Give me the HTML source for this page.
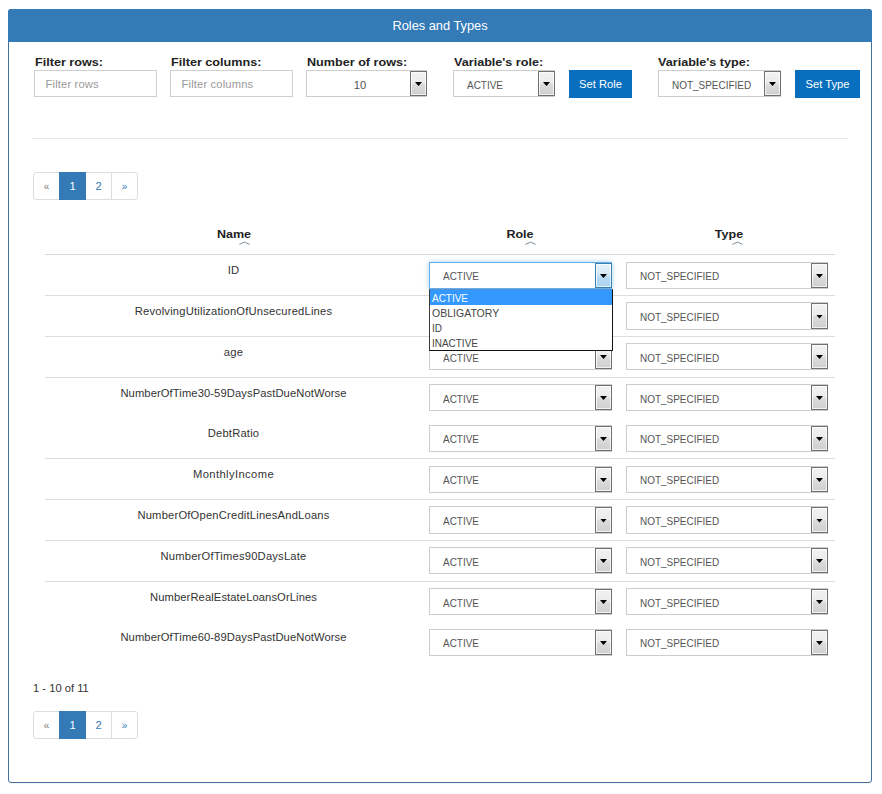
<!DOCTYPE html>
<html lang="en">
<head>
<meta charset="utf-8">
<title>Roles and Types</title>
<style>
*{box-sizing:border-box;}
html,body{margin:0;padding:0;}
body{width:882px;height:794px;background:#fff;position:relative;overflow:hidden;
  font-family:"Liberation Sans",Arial,sans-serif;font-size:11.2px;color:#333;}
.abs{position:absolute;}
.panel{position:absolute;left:8px;top:9px;width:864px;height:774px;border:1px solid #44709c;box-shadow:0 1px 1px rgba(0,0,0,.05);border-radius:3px;background:#fff;}
.panel-heading{position:absolute;left:-1px;top:-1px;width:864px;height:33px;background:#337ab7;border-radius:3px 3px 0 0;
  color:#fff;text-align:center;font-size:12.8px;line-height:33px;}
.lbl{position:absolute;top:55px;height:14px;line-height:14px;font-weight:bold;font-size:10.6px;color:#222;white-space:nowrap;
  transform-origin:0 50%;transform:scaleX(1.19);}
.inp{position:absolute;top:70px;height:27px;width:123px;border:1px solid #cfcfcf;background:#fff;color:#999;
  line-height:27px;padding-left:10.6px;font-size:11.2px;letter-spacing:0.15px;white-space:nowrap;}
.sel{position:absolute;height:27px;border:1px solid #cdcdcd;background:#fff;color:#555;line-height:26px;font-size:11.2px;white-space:nowrap;}
.sel .t{position:absolute;left:13px;top:0;transform-origin:0 50%;transform:scaleX(0.89);}
.sel .tc{position:absolute;left:3px;right:16px;top:0;text-align:center;}
.sel.tp .t,.sel.tp .tc{top:1px;}
.sel .btn{position:absolute;right:-1px;top:0;bottom:0;width:17px;border:1px solid #707070;border-radius:0;
  background:linear-gradient(#f2f2f2 0%,#ebebeb 48%,#dcdcdc 52%,#cfcfcf 100%);box-shadow:inset 0 0 0 1px rgba(255,255,255,.7);}
.sel .btn:after{content:"";position:absolute;left:4px;top:50%;margin-top:-1.5px;width:7px;height:4px;background:#000;clip-path:polygon(0 0,100% 0,50% 100%);}
.sel.focus{border-color:#66afe9;box-shadow:0 0 5px rgba(102,175,233,.6);}
.sel.focus .btn{border-color:#3c7fb1;background:linear-gradient(#e6f2fb 0%,#d2e8f8 48%,#bbdcf5 52%,#a9d3f2 100%);}
.bbtn{position:absolute;top:70px;height:28px;background:#086fbe;color:#fff;text-align:center;line-height:29px;font-size:11.2px;white-space:nowrap;}
.hr{position:absolute;left:32px;top:138px;width:816px;height:1px;background:#e8e8e8;}
.pg{position:absolute;left:33px;height:28px;display:flex;}
.pg span{display:block;height:28px;border:1px solid #ddd;margin-left:-1px;line-height:26px;text-align:center;color:#337ab7;font-size:11.2px;background:#fff;}
.pg span:first-child{margin-left:0;border-radius:3px 0 0 3px;}
.pg span:last-child{border-radius:0 3px 3px 0;}
.pg span.dis{color:#777;font-size:10px;line-height:28px;}
.pg span.nx{font-size:10px;line-height:28px;}
.pg span.on{background:#337ab7;border-color:#337ab7;color:#fff;position:relative;}
.th{position:absolute;top:227px;height:14px;line-height:14px;font-weight:bold;font-size:10.8px;color:#222;text-align:center;white-space:nowrap;transform:scaleX(1.16);}
.sort{position:absolute;top:241.4px;width:11px;height:4px;}
.line{position:absolute;left:45px;width:790px;height:1px;background:#ddd;}
.nm{position:absolute;left:45px;width:377px;text-align:center;height:14px;line-height:14px;font-size:11.2px;color:#333;white-space:nowrap;letter-spacing:0.2px;}
.dd{position:absolute;left:429px;top:289px;width:184px;height:62px;border:1px solid #111;border-top-color:#5a8ed0;border-left-color:#3a3a3a;background:#fff;color:#444;font-size:11.2px;}
.dd div{height:15px;line-height:17px;padding-left:2px;overflow:hidden;}
.dd div span{display:inline-block;transform-origin:0 50%;transform:scaleX(0.89);}
.dd div.on{background:#3399ff;color:#fff;}
</style>
</head>
<body>
<div class="panel">
  <div class="panel-heading">Roles and Types</div>
</div>

<div class="lbl" style="left:35px;">Filter rows:</div>
<div class="lbl" style="left:171px;">Filter columns:</div>
<div class="lbl" style="left:307px;">Number of rows:</div>
<div class="lbl" style="left:454px;">Variable's role:</div>
<div class="lbl" style="left:658px;">Variable's type:</div>

<div class="inp" style="left:34px;">Filter rows</div>
<div class="inp" style="left:170px;">Filter columns</div>
<div class="sel tp" style="left:306px;top:70px;width:121px;"><span class="tc">10</span><span class="btn"></span></div>
<div class="sel tp" style="left:453px;top:70px;width:102px;"><span class="t">ACTIVE</span><span class="btn"></span></div>
<div class="bbtn" style="left:569px;width:63px;">Set Role</div>
<div class="sel tp" style="left:658px;top:70px;width:123px;"><span class="t">NOT_SPECIFIED</span><span class="btn"></span></div>
<div class="bbtn" style="left:795px;width:65px;">Set Type</div>

<div class="hr"></div>

<div class="pg" style="top:172px;"><span class="dis" style="width:27px">«</span><span class="on" style="width:27px">1</span><span style="width:27px">2</span><span class="nx" style="width:27px">»</span></div>

<div class="th" style="left:204px;width:60px;">Name</div>
<div class="th" style="left:490px;width:60px;">Role</div>
<div class="th" style="left:698.5px;width:60px;">Type</div>
<svg class="sort" style="left:239.2px;" viewBox="0 0 11 4"><path d="M0.3 3.4 L5.5 1.1 L10.7 3.4" fill="none" stroke="#6f7f8f" stroke-width="0.9"/></svg>
<svg class="sort" style="left:525.1px;" viewBox="0 0 11 4"><path d="M0.3 3.4 L5.5 1.1 L10.7 3.4" fill="none" stroke="#6f7f8f" stroke-width="0.9"/></svg>
<svg class="sort" style="left:732.2px;" viewBox="0 0 11 4"><path d="M0.3 3.4 L5.5 1.1 L10.7 3.4" fill="none" stroke="#6f7f8f" stroke-width="0.9"/></svg>

<div class="line" style="top:254px;background:#d6d6d6;"></div>
<div class="line" style="top:295px;"></div>
<div class="line" style="top:336px;"></div>
<div class="line" style="top:377px;"></div>
<div class="line" style="top:458px;"></div>
<div class="line" style="top:499px;"></div>
<div class="line" style="top:540px;"></div>
<div class="line" style="top:581px;"></div>

<div class="nm" style="top:263px;">ID</div>
<div class="nm" style="top:304px;">RevolvingUtilizationOfUnsecuredLines</div>
<div class="nm" style="top:345px;">age</div>
<div class="nm" style="top:386px;letter-spacing:0.1px;">NumberOfTime30-59DaysPastDueNotWorse</div>
<div class="nm" style="top:426px;">DebtRatio</div>
<div class="nm" style="top:467px;letter-spacing:0.4px;">MonthlyIncome</div>
<div class="nm" style="top:508px;">NumberOfOpenCreditLinesAndLoans</div>
<div class="nm" style="top:549px;">NumberOfTimes90DaysLate</div>
<div class="nm" style="top:590px;letter-spacing:0.1px;">NumberRealEstateLoansOrLines</div>
<div class="nm" style="top:630px;letter-spacing:0.1px;">NumberOfTime60-89DaysPastDueNotWorse</div>



<div class="sel focus" style="left:429px;top:262px;width:183px;height:27px;"><span class="t" style="top:0px">ACTIVE</span><span class="btn"></span></div>
<div class="sel" style="left:429px;top:302px;width:183px;height:28px;"><span class="t" style="top:1px">ACTIVE</span><span class="btn"></span></div>
<div class="sel" style="left:429px;top:343px;width:183px;height:27px;"><span class="t" style="top:1px">ACTIVE</span><span class="btn"></span></div>
<div class="sel" style="left:429px;top:384px;width:183px;height:27px;"><span class="t" style="top:1px">ACTIVE</span><span class="btn"></span></div>
<div class="sel" style="left:429px;top:425px;width:183px;height:27px;"><span class="t" style="top:0px">ACTIVE</span><span class="btn"></span></div>
<div class="sel" style="left:429px;top:466px;width:183px;height:27px;"><span class="t" style="top:0px">ACTIVE</span><span class="btn"></span></div>
<div class="sel" style="left:429px;top:506px;width:183px;height:28px;"><span class="t" style="top:1px">ACTIVE</span><span class="btn"></span></div>
<div class="sel" style="left:429px;top:547px;width:183px;height:27px;"><span class="t" style="top:1px">ACTIVE</span><span class="btn"></span></div>
<div class="sel" style="left:429px;top:588px;width:183px;height:27px;"><span class="t" style="top:1px">ACTIVE</span><span class="btn"></span></div>
<div class="sel" style="left:429px;top:629px;width:183px;height:27px;"><span class="t" style="top:0px">ACTIVE</span><span class="btn"></span></div>
<div class="sel" style="left:626px;top:262px;width:202px;height:27px;"><span class="t" style="top:0px">NOT_SPECIFIED</span><span class="btn"></span></div>
<div class="sel" style="left:626px;top:302px;width:202px;height:28px;"><span class="t" style="top:1px">NOT_SPECIFIED</span><span class="btn"></span></div>
<div class="sel" style="left:626px;top:343px;width:202px;height:27px;"><span class="t" style="top:1px">NOT_SPECIFIED</span><span class="btn"></span></div>
<div class="sel" style="left:626px;top:384px;width:202px;height:27px;"><span class="t" style="top:1px">NOT_SPECIFIED</span><span class="btn"></span></div>
<div class="sel" style="left:626px;top:425px;width:202px;height:27px;"><span class="t" style="top:0px">NOT_SPECIFIED</span><span class="btn"></span></div>
<div class="sel" style="left:626px;top:466px;width:202px;height:27px;"><span class="t" style="top:0px">NOT_SPECIFIED</span><span class="btn"></span></div>
<div class="sel" style="left:626px;top:506px;width:202px;height:28px;"><span class="t" style="top:1px">NOT_SPECIFIED</span><span class="btn"></span></div>
<div class="sel" style="left:626px;top:547px;width:202px;height:27px;"><span class="t" style="top:1px">NOT_SPECIFIED</span><span class="btn"></span></div>
<div class="sel" style="left:626px;top:588px;width:202px;height:27px;"><span class="t" style="top:1px">NOT_SPECIFIED</span><span class="btn"></span></div>
<div class="sel" style="left:626px;top:629px;width:202px;height:27px;"><span class="t" style="top:0px">NOT_SPECIFIED</span><span class="btn"></span></div>

<div class="dd"><div class="on"><span>ACTIVE</span></div><div><span style="transform:scaleX(0.94)">OBLIGATORY</span></div><div><span>ID</span></div><div><span>INACTIVE</span></div></div>

<div class="abs" style="left:33px;top:681px;height:14px;line-height:14px;white-space:nowrap;">1 - 10 of 11</div>

<div class="pg" style="top:711px;"><span class="dis" style="width:27px">«</span><span class="on" style="width:27px">1</span><span style="width:27px">2</span><span class="nx" style="width:27px">»</span></div>
</body>
</html>
